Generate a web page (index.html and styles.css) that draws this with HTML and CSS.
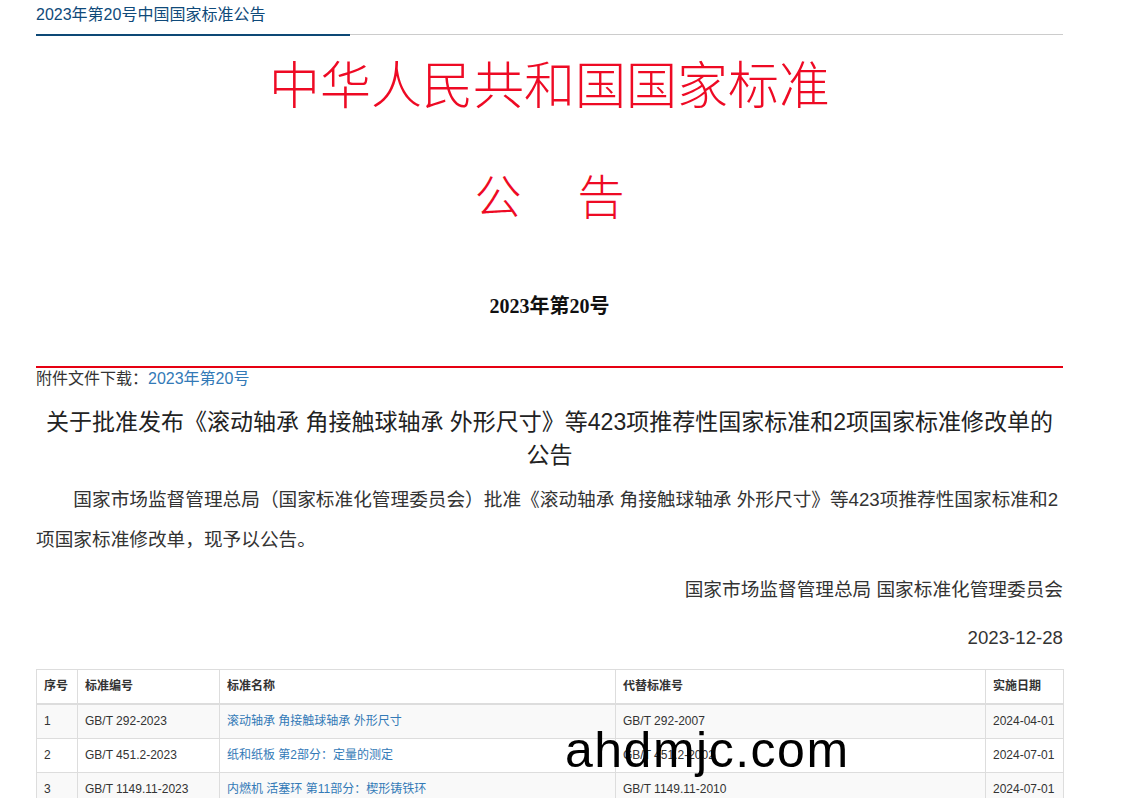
FILE: index.html
```html
<!DOCTYPE html>
<html lang="zh-CN">
<head>
<meta charset="utf-8">
<title>2023年第20号中国国家标准公告</title>
<link rel="stylesheet" href="styles.css">
</head>
<body>
<div class="page">
  <div class="crumb">
    <div class="crumb-title">2023年第20号中国国家标准公告</div>
    <div class="crumb-line"><span class="crumb-bar"></span><span class="crumb-rest"></span></div>
  </div>

  <div class="doc-head">
    <div class="doc-org">中华人民共和国国家标准</div>
    <div class="doc-kind"><span>公</span><span>告</span></div>
    <div class="doc-no">2023年第20号</div>
  </div>

  <div class="attach">附件文件下载：<a href="#" class="link">2023年第20号</a></div>

  <h1 class="notice-title">关于批准发布《滚动轴承 角接触球轴承 外形尺寸》等423项推荐性国家标准和2项国家标准修改单的<br>公告</h1>

  <p class="notice-body">国家市场监督管理总局（国家标准化管理委员会）批准《滚动轴承 角接触球轴承 外形尺寸》等423项推荐性国家标准和2项国家标准修改单，现予以公告。</p>

  <p class="notice-sign">国家市场监督管理总局 国家标准化管理委员会</p>
  <p class="notice-date">2023-12-28</p>

  <table class="std-table">
    <thead>
      <tr>
        <th class="c-no">序号</th>
        <th class="c-code">标准编号</th>
        <th class="c-name">标准名称</th>
        <th class="c-rep">代替标准号</th>
        <th class="c-date">实施日期</th>
      </tr>
    </thead>
    <tbody>
      <tr>
        <td>1</td>
        <td>GB/T 292-2023</td>
        <td><a href="#" class="link">滚动轴承 角接触球轴承 外形尺寸</a></td>
        <td>GB/T 292-2007</td>
        <td>2024-04-01</td>
      </tr>
      <tr>
        <td>2</td>
        <td>GB/T 451.2-2023</td>
        <td><a href="#" class="link">纸和纸板 第2部分：定量的测定</a></td>
        <td>GB/T 451.2-2002</td>
        <td>2024-07-01</td>
      </tr>
      <tr>
        <td>3</td>
        <td>GB/T 1149.11-2023</td>
        <td><a href="#" class="link">内燃机 活塞环 第11部分：楔形铸铁环</a></td>
        <td>GB/T 1149.11-2010</td>
        <td>2024-07-01</td>
      </tr>
    </tbody>
  </table>
</div>
<div class="watermark">ahdmjc.com</div>
</body>
</html>
```

FILE: styles.css
```css
html, body {
  margin: 0;
  padding: 0;
  background: #fff;
}

body {
  font-family: "Liberation Sans", "Noto Sans CJK SC", sans-serif;
  color: #333;
  position: relative;
  overflow: hidden;
  height: 798px;
}

.page {
  width: 1027px;
  margin-left: 36px;
}

.crumb {
  padding-top: 4px;
}

.crumb-title {
  font-size: 16px;
  line-height: 22px;
  color: #0f4a7a;
  height: 30px;
}

.crumb-line {
  display: flex;
  align-items: flex-start;
  height: 2px;
}

.crumb-bar {
  width: 314px;
  height: 2px;
  background: #0d4876;
}

.crumb-rest {
  flex: 1;
  height: 1px;
  background: #cccccc;
}

.doc-head {
  text-align: center;
}

.doc-org {
  margin-top: 16px;
  font-family: "Noto Sans CJK SC", sans-serif;
  font-weight: 300;
  font-size: 51px;
  line-height: 60px;
  color: #ee0a24;
}

.doc-kind {
  margin-top: 54px;
  display: flex;
  justify-content: center;
  gap: 56px;
  font-family: "Noto Sans CJK SC", sans-serif;
  font-weight: 300;
  font-size: 47px;
  line-height: 56px;
  color: #ee0a24;
}

.doc-no {
  margin-top: 70px;
  font-family: "Liberation Serif", "Noto Sans CJK SC", serif;
  font-weight: bold;
  font-size: 20px;
  line-height: 28px;
  color: #111;
}

.attach {
  margin-top: 46px;
  border-top: 2px solid #e60012;
  font-size: 16px;
  line-height: 22px;
  color: #333;
}

.link {
  color: #337ab7;
  text-decoration: none;
}

.notice-title {
  margin: 16px 0 0;
  text-align: center;
  font-weight: normal;
  font-size: 23px;
  line-height: 33px;
  color: #222;
}

.notice-body {
  margin: 8px 0 0;
  font-size: 18.67px;
  line-height: 40px;
  text-indent: 2em;
  color: #333;
}

.notice-sign {
  margin: 10px 0 0;
  text-align: right;
  font-size: 18.67px;
  line-height: 40px;
  color: #333;
}

.notice-date {
  margin: 8px 0 0;
  text-align: right;
  font-size: 18.67px;
  line-height: 40px;
  color: #333;
}

.std-table {
  margin-top: 11px;
  width: 1027px;
  border-collapse: collapse;
  table-layout: fixed;
  font-size: 12px;
  line-height: 1.42857;
  border: 1px solid #ddd;
}

.std-table th,
.std-table td {
  box-sizing: border-box;
  border: 1px solid #ddd;
  padding: 8px 7px;
  text-align: left;
  vertical-align: top;
  color: #333;
}

.std-table th {
  font-weight: bold;
  border-bottom: 2px solid #ddd;
}

.std-table tbody tr:nth-child(odd) {
  background: #f9f9f9;
}

.c-no { width: 41px; }
.c-code { width: 142px; }
.c-name { width: 396px; }
.c-rep { width: 370px; }
.c-date { width: 78px; }

.watermark {
  position: absolute;
  left: 565px;
  top: 725px;
  font-family: "Liberation Sans", sans-serif;
  font-size: 50px;
  line-height: 50px;
  letter-spacing: 1.5px;
  color: #000;
}
```
